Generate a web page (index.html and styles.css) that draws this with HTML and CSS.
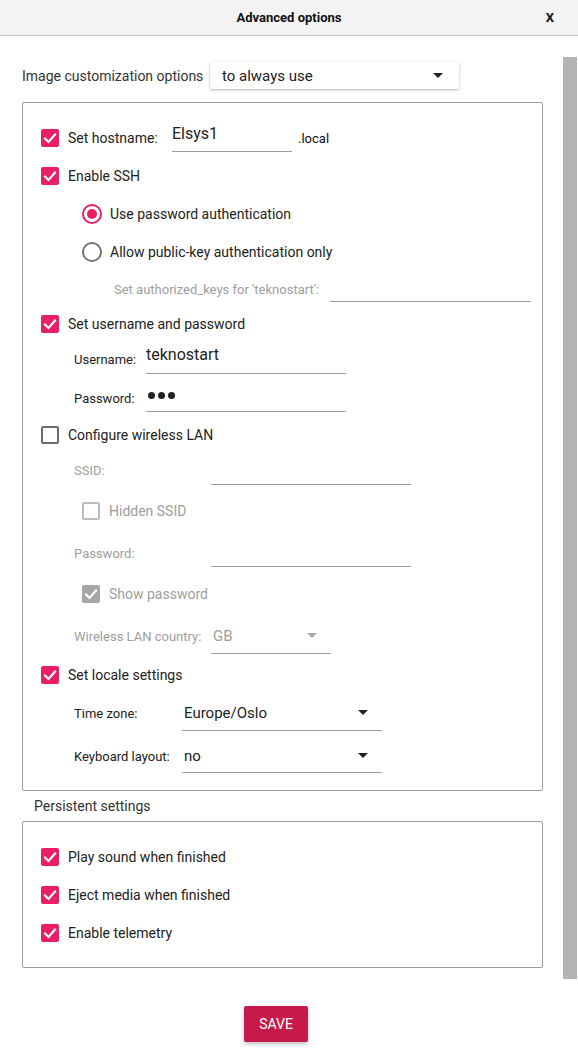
FILE: index.html
```html
<!DOCTYPE html>
<html>
<head>
<meta charset="utf-8">
<link rel="stylesheet" href="styles.css">
</head>
<body>
<div class="header">
  <div class="title">Advanced options</div>
  <div class="close">X</div>
</div>
<div class="main">
  <div class="content">
    <div class="top-row">
      <span class="top-label">Image customization options</span>
      <div class="top-combo"><span>to always use</span><span class="arrow"></span></div>
    </div>

    <div class="box box1">
      <div class="row r-host">
        <span class="cb on"><svg viewBox="0 0 18 18"><polyline points="4,9.5 7.5,13 14,5.5"/></svg></span>
        <span class="lbl">Set hostname:</span>
        <div class="field f-host"><span>Elsys1</span></div>
        <span class="suffix">.local</span>
      </div>
      <div class="row r38">
        <span class="cb on"><svg viewBox="0 0 18 18"><polyline points="4,9.5 7.5,13 14,5.5"/></svg></span>
        <span class="lbl">Enable SSH</span>
      </div>
      <div class="row r38 ind-radio">
        <span class="radio on"></span>
        <span class="lbl">Use password authentication</span>
      </div>
      <div class="row r38 ind-radio">
        <span class="radio"></span>
        <span class="lbl">Allow public-key authentication only</span>
      </div>
      <div class="row r-auth">
        <span class="sub dis">Set authorized_keys for 'teknostart':</span>
        <div class="field f-auth"></div>
      </div>
      <div class="row r-user-cb">
        <span class="cb on"><svg viewBox="0 0 18 18"><polyline points="4,9.5 7.5,13 14,5.5"/></svg></span>
        <span class="lbl">Set username and password</span>
      </div>
      <div class="row r-user ind-sub">
        <span class="sub w72">Username:</span>
        <div class="field f-user"><span>teknostart</span></div>
      </div>
      <div class="row r-pass ind-sub">
        <span class="sub w72">Password:</span>
        <div class="field f-pass"><span class="dot"></span><span class="dot"></span><span class="dot"></span></div>
      </div>
      <div class="row r-wifi">
        <span class="cb off"></span>
        <span class="lbl">Configure wireless LAN</span>
      </div>
      <div class="row r-ssid ind-sub">
        <span class="sub dis w137">SSID:</span>
        <div class="field f-ssid"></div>
      </div>
      <div class="row r-hidden ind-radio">
        <span class="cb dis-off"></span>
        <span class="lbl dis">Hidden SSID</span>
      </div>
      <div class="row r-wpass ind-sub">
        <span class="sub dis w137">Password:</span>
        <div class="field f-wpass"></div>
      </div>
      <div class="row r-show ind-radio">
        <span class="cb dis-on"><svg viewBox="0 0 18 18"><polyline points="4,9.5 7.5,13 14,5.5"/></svg></span>
        <span class="lbl dis">Show password</span>
      </div>
      <div class="row r-country ind-sub">
        <span class="sub dis w137">Wireless LAN country:</span>
        <div class="field combo f-country"><span class="dis">GB</span><span class="arrow dis-arrow"></span></div>
      </div>
      <div class="row r-locale">
        <span class="cb on"><svg viewBox="0 0 18 18"><polyline points="4,9.5 7.5,13 14,5.5"/></svg></span>
        <span class="lbl">Set locale settings</span>
      </div>
      <div class="row r-tz ind-sub">
        <span class="sub w108">Time zone:</span>
        <div class="field combo f-tz"><span>Europe/Oslo</span><span class="arrow"></span></div>
      </div>
      <div class="row r-kb ind-sub">
        <span class="sub w108">Keyboard layout:</span>
        <div class="field combo f-kb"><span>no</span><span class="arrow"></span></div>
      </div>
    </div>

    <div class="section-title">Persistent settings</div>

    <div class="box box2">
      <div class="row r38">
        <span class="cb on"><svg viewBox="0 0 18 18"><polyline points="4,9.5 7.5,13 14,5.5"/></svg></span>
        <span class="lbl">Play sound when finished</span>
      </div>
      <div class="row r38">
        <span class="cb on"><svg viewBox="0 0 18 18"><polyline points="4,9.5 7.5,13 14,5.5"/></svg></span>
        <span class="lbl">Eject media when finished</span>
      </div>
      <div class="row r38">
        <span class="cb on"><svg viewBox="0 0 18 18"><polyline points="4,9.5 7.5,13 14,5.5"/></svg></span>
        <span class="lbl">Enable telemetry</span>
      </div>
    </div>

    <button class="save">SAVE</button>
  </div>
  <div class="scrollbar"></div>
</div>
</body>
</html>
```

FILE: styles.css
```css
* { box-sizing: border-box; }
html, body { margin: 0; padding: 0; background: #ffffff; }
body {
  font-family: Roboto, "Liberation Sans", sans-serif;
  color: #212121;
  width: 578px;
  height: 1058px;
  overflow: hidden;
}
.header {
  height: 36px;
  background: #f3f3f3;
  border-bottom: 1px solid #c4c4c4;
  display: flex;
  align-items: center;
  justify-content: center;
  position: relative;
}
.title { font-size: 13px; font-weight: bold; color: #111; }
.close {
  position: absolute;
  right: 24px;
  top: 10px;
  font-size: 13px;
  font-weight: bold;
  color: #111;
}
.main {
  display: flex;
  padding-top: 21px;
}
.content {
  margin-left: 22px;
  width: 521px;
  display: flex;
  flex-direction: column;
}
.scrollbar {
  margin-left: 20px;
  width: 14px;
  height: 922px;
  background: #b3b3b3;
}
.top-row {
  margin-top: 5px;
  height: 27px;
  display: flex;
  align-items: center;
}
.top-label { font-size: 14px; color: #333; width: 188px; }
.top-combo {
  width: 249px;
  height: 27px;
  background: #fff;
  border-radius: 2px;
  box-shadow: 0 1px 3px rgba(0,0,0,0.3);
  display: flex;
  align-items: center;
  justify-content: space-between;
  padding: 0 16px 0 12px;
  font-size: 15px;
  color: #222;
}
.arrow {
  width: 0; height: 0;
  border-left: 5px solid transparent;
  border-right: 5px solid transparent;
  border-top: 5px solid #222;
}
.dis-arrow { border-top-color: #a8a8a8; }
.box {
  border: 1px solid #9e9e9e;
  border-radius: 2px;
  display: flex;
  flex-direction: column;
  padding-left: 18px;
}
.box1 { margin-top: 13px; height: 689px; padding-top: 16px; }
.box2 { height: 147px; padding-top: 16px; }
.row { display: flex; align-items: center; }
.r38 { height: 38px; }
.r-host { height: 38px; }
.r-auth { height: 36px; padding-left: 73px; }
.r-user-cb { height: 34px; }
.r-user { height: 36px; }
.r-pass { height: 42px; }
.r-wifi { height: 32px; }
.r-ssid { height: 38px; }
.r-hidden { height: 44px; }
.r-wpass { height: 40px; }
.r-show { height: 42px; }
.r-country { height: 42px; }
.r-locale { height: 36px; }
.r-tz { height: 40px; }
.r-kb { height: 46px; }
.ind-radio { padding-left: 41px; }
.ind-sub { padding-left: 33px; }
.cb {
  width: 18px; height: 18px;
  border-radius: 2px;
  margin-right: 9px;
  flex: none;
  display: flex;
  align-items: center;
  justify-content: center;
}
.cb svg { width: 18px; height: 18px; }
.cb polyline { fill: none; stroke: #fff; stroke-width: 2.2; stroke-linecap: square; }
.cb.on { background: #e91e63; }
.cb.off { border: 2px solid #6b6b6b; }
.cb.dis-off { border: 2px solid #bdbdbd; }
.cb.dis-on { background: #a6a6a6; }
.radio {
  width: 20px; height: 20px;
  border-radius: 50%;
  border: 2px solid #757575;
  margin-right: 8px;
  flex: none;
  position: relative;
}
.radio.on { border-color: #e91e63; }
.radio.on::after {
  content: "";
  position: absolute;
  left: 3px; top: 3px;
  width: 10px; height: 10px;
  border-radius: 50%;
  background: #e91e63;
}
.lbl { font-size: 14px; color: #222; }
.lbl.dis, .sub.dis, span.dis { color: #9e9e9e; }
.sub { font-size: 13px; color: #222; }
.w72 { width: 72px; }
.w137 { width: 137px; }
.w108 { width: 108px; }
.field {
  border-bottom: 1px solid #9e9e9e;
  display: flex;
  align-items: center;
  font-size: 15px;
  color: #222;
}
.r-host .lbl { width: 104px; }
.f-host { width: 120px; height: 27px; padding-bottom: 8px; font-size: 16px; }
.suffix { font-size: 13px; margin-left: 6px; color: #111; }
.f-auth { width: 201px; height: 25px; margin-left: 11px; }
.f-user { width: 200px; height: 29px; padding-bottom: 8px; font-size: 16px; }
.f-pass { width: 200px; height: 27px; padding-bottom: 4px; padding-left: 2px; gap: 3px; }
.dot { width: 7px; height: 7px; border-radius: 50%; background: #222; }
.f-ssid { width: 200px; height: 29px; }
.f-wpass { width: 200px; height: 27px; }
.combo { justify-content: space-between; padding-left: 2px; padding-right: 14px; }
.f-country { width: 120px; height: 35px; padding-right: 14px; }
.f-tz { width: 200px; height: 35px; }
.f-kb { width: 200px; height: 33px; }
.section-title {
  height: 30px;
  display: flex;
  align-items: center;
  padding-left: 12px;
  font-size: 14px;
  color: #333;
}
.save {
  margin-top: 38px;
  margin-left: 222px;
  width: 64px;
  height: 36px;
  background: #c51a4a;
  color: #fff;
  border: none;
  border-radius: 2px;
  box-shadow: 0 2px 4px rgba(0,0,0,0.25);
  font-family: Roboto, "Liberation Sans", sans-serif;
  font-size: 14px;
  padding: 0;
}
```
